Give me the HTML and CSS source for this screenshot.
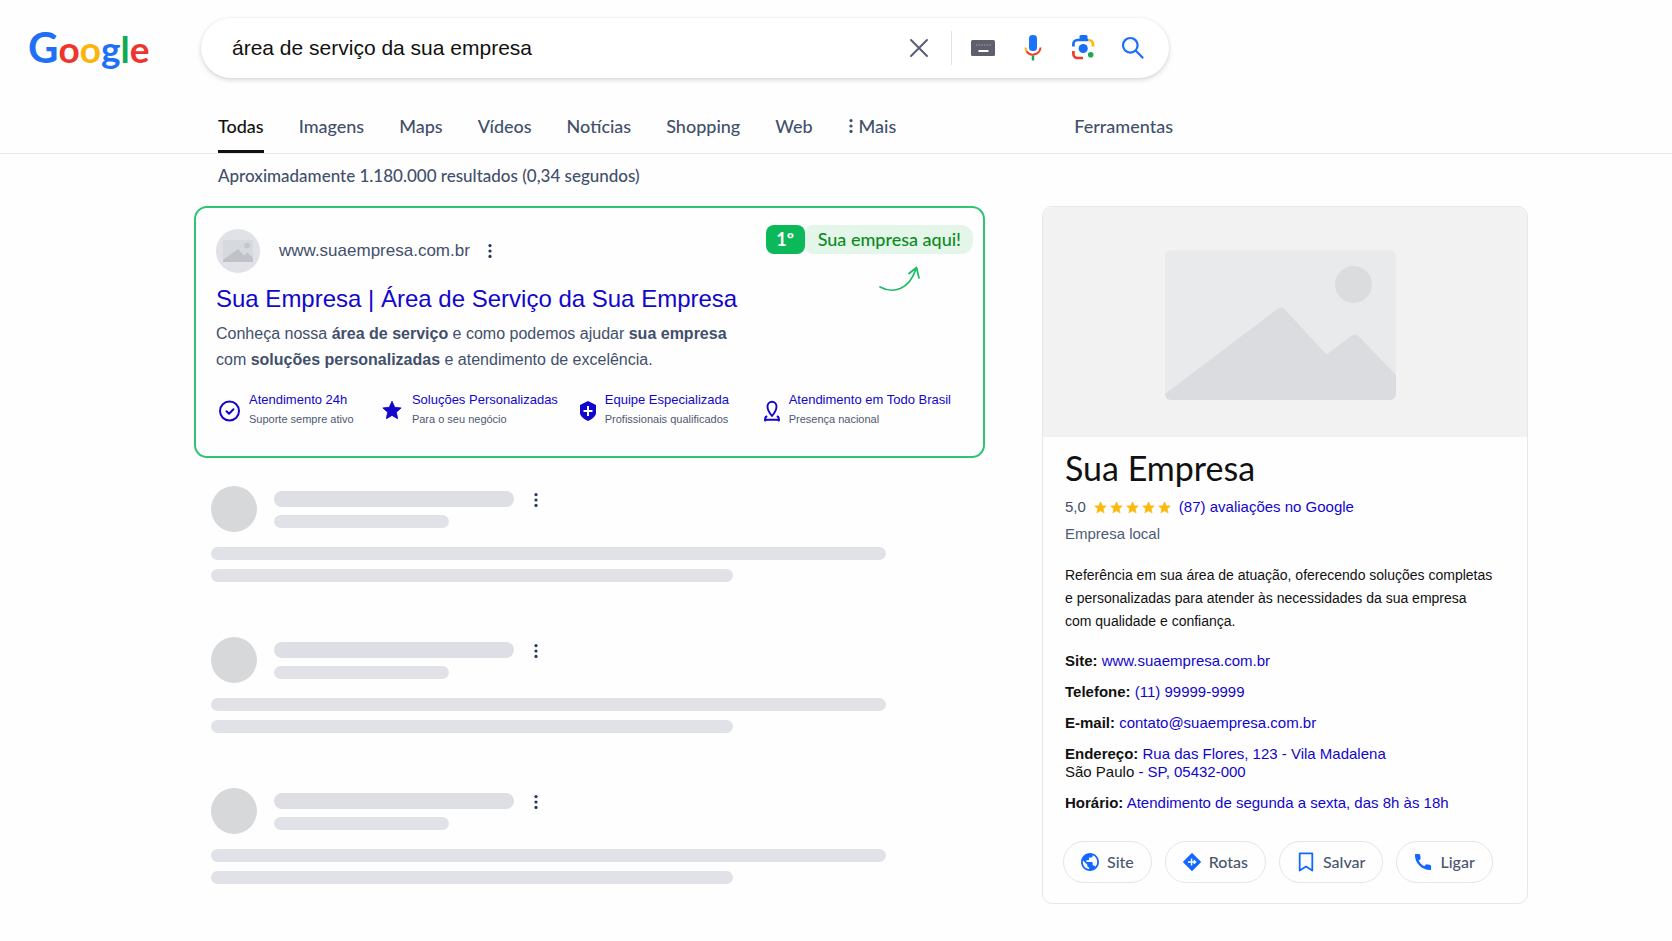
FILE: index.html
```
<!DOCTYPE html>
<html lang="pt-BR">
<head>
<meta charset="utf-8">
<meta name="viewport" content="width=device-width, initial-scale=1">
<title>área de serviço da sua empresa</title>
<link rel="stylesheet" href="styles.css">
</head>
<body>
<svg class="sprite" aria-hidden="true">
  <symbol id="dots" viewBox="0 0 6 16"><circle cx="3" cy="2.6" r="1.6"/><circle cx="3" cy="8" r="1.6"/><circle cx="3" cy="13.4" r="1.6"/></symbol>
  <symbol id="star" viewBox="0 0 24 24"><path d="M12 1.5l3.2 7.1 7.6.8-5.7 5.1 1.6 7.6L12 18.2l-6.7 3.9 1.6-7.6L1.2 9.4l7.6-.8z" stroke="currentColor" stroke-width="1" stroke-linejoin="round"/></symbol>
</svg>

<header class="header">
  <a class="logo" href="#" aria-label="Google"><span class="logo-cap blue">G</span><span class="red">o</span><span class="yellow">o</span><span class="blue">g</span><span class="green">l</span><span class="red">e</span></a>
  <form class="search" role="search">
    <input class="search-input" type="text" aria-label="Pesquisar" value="área de serviço da sua empresa">
    <button class="icon-btn" type="button" aria-label="Limpar">
      <svg viewBox="0 0 24 24" fill="none" stroke="#566077" stroke-width="2" stroke-linecap="round"><path d="M4 4l16 16M20 4L4 20"/></svg>
    </button>
    <span class="search-divider"></span>
    <span class="search-tools">
      <button class="icon-btn" type="button" aria-label="Teclado">
        <svg viewBox="0 0 24 24"><rect x="0" y="4" width="24" height="16" rx="1.5" fill="#5c606d"/><path d="M5 9h15" stroke="#a5a8b2" stroke-width="1.2" stroke-dasharray="1.4 1.3"/><path d="M7.500 15h10" stroke="#fff" stroke-width="2"/></svg>
      </button>
      <button class="icon-btn" type="button" aria-label="Pesquisa por voz">
        <svg viewBox="0 0 24 24" fill="none" stroke-width="2"><rect x="8" y="-1" width="8" height="16" rx="3.500" fill="#1a73f8"/><path d="M4.500 11.500a7.500 7.500 0 0 0 1.300 4" stroke="#fbb604"/><path d="M5.600 15.200A7.600 7.600 0 0 0 19.500 11.500" stroke="#f03a2b"/><path d="M12 19.500v5" stroke="#1da750" stroke-width="2.500"/></svg>
      </button>
      <button class="icon-btn" type="button" aria-label="Pesquisa por imagem">
        <svg viewBox="0 0 24 24" fill="none" stroke-width="2.700"><path d="M2.400 10.500V8a4 4 0 0 1 4-4h11" stroke="#1a6dfa"/><path d="M8.500 4V.5q0-1.500 1.500-1.500h5q1.500 0 1.500 1.500V4z" fill="#1a6dfa"/><path d="M17.500 4a4.500 4.500 0 0 1 4.500 4.500V10.500" stroke="#fbbc04"/><path d="M2.400 15v3a4 4 0 0 0 4 4H12" stroke="#f03a2b"/><circle cx="12.200" cy="12.500" r="4.600" fill="#1a6dfa"/><circle cx="19.700" cy="18.800" r="2.800" fill="#1da750"/></svg>
      </button>
      <button class="icon-btn" type="submit" aria-label="Pesquisar">
        <svg viewBox="0 0 24 24" fill="none" stroke="#1a6dfa" stroke-width="2.200" stroke-linecap="round"><circle cx="9.300" cy="9.300" r="7.300"/><path d="M14.600 14.600l6.900 7"/></svg>
      </button>
    </span>
  </form>
</header>

<nav class="tabs" aria-label="Filtros">
  <div class="tabs-inner">
    <a class="tab tab-active" href="#">Todas</a>
    <a class="tab" href="#">Imagens</a>
    <a class="tab" href="#">Maps</a>
    <a class="tab" href="#">Vídeos</a>
    <a class="tab" href="#">Notícias</a>
    <a class="tab" href="#">Shopping</a>
    <a class="tab" href="#">Web</a>
    <a class="tab tab-more" href="#"><svg class="dots" fill="currentColor"><use href="#dots"/></svg>Mais</a>
    <a class="tab tab-tools" href="#">Ferramentas</a>
  </div>
</nav>

<main class="page">
  <p class="stats">Aproximadamente 1.180.000 resultados (0,34 segundos)</p>
  <div class="columns">
    <section class="results">
      <article class="result">
        <div class="result-top">
          <div class="source">
            <span class="avatar">
              <svg viewBox="0 0 30 22"><rect width="30" height="22" rx="1" fill="#d6d9de"/><circle cx="24" cy="5.500" r="2.800" fill="#c3c6ca"/><path d="M0 22v-2L15 9l6 6.500 3.500-3L30 18v4z" fill="#bfc2c6"/></svg>
            </span>
            <span class="source-url">www.suaempresa.com.br</span>
            <button class="more-btn" type="button" aria-label="Mais opções"><svg class="dots" fill="currentColor"><use href="#dots"/></svg></button>
          </div>
          <div class="rank">
            <span class="rank-num">1º</span><span class="rank-text">Sua empresa aqui!</span>
            <svg class="rank-arrow" viewBox="0 0 42 26" fill="none" stroke="#19bd63" stroke-width="1.700" stroke-linecap="round" stroke-linejoin="round"><path d="M2 21C15 28 31 24 38 3M31 7.500l7.500-6 2.500 10.500"/></svg>
          </div>
        </div>
        <h2 class="result-title"><a href="#">Sua Empresa | Área de Serviço da Sua Empresa</a></h2>
        <p class="result-text">Conheça nossa <b>área de serviço</b> e como podemos ajudar <b>sua empresa</b><br>com <b>soluções personalizadas</b> e atendimento de excelência.</p>
        <ul class="features">
          <li class="feature">
            <svg class="feature-icon" viewBox="0 0 22 22" fill="none" stroke="currentColor" stroke-width="2" stroke-linecap="round" stroke-linejoin="round"><circle cx="11.500" cy="11" r="9.500"/><path d="M8.500 11.300l2.500 2.500 4.500-4.600"/></svg>
            <div><a class="feature-name" href="#">Atendimento 24h</a><span class="feature-note">Suporte sempre ativo</span></div>
          </li>
          <li class="feature">
            <svg class="feature-icon" viewBox="-1 0 26 26" fill="currentColor"><use href="#star" width="24" height="24"/></svg>
            <div><a class="feature-name" href="#">Soluções Personalizadas</a><span class="feature-note">Para o seu negócio</span></div>
          </li>
          <li class="feature">
            <svg class="feature-icon" viewBox="-3 0 22 22"><path d="M11 1l8 4v8c0 3-4 6.500-8 8-4-1.500-8-5-8-8V5z" fill="currentColor"/><path d="M11 6v10M6.500 11h9" stroke="#fff" stroke-width="2"/></svg>
            <div><a class="feature-name" href="#">Equipe Especializada</a><span class="feature-note">Profissionais qualificados</span></div>
          </li>
          <li class="feature">
            <svg class="feature-icon" viewBox="-3 0 22 22" fill="none" stroke="currentColor" stroke-width="1.900" stroke-linecap="round" stroke-linejoin="round"><path d="M11 16C8 12.500 6.500 9.500 6.500 6.500a4.500 4.800 0 0 1 9 0c0 3-1.500 6-4.500 9.500z"/><path d="M5.500 16.500c-1.500.5-1.500 3-1.500 4l2-.8h10l2 .8c0-1 0-3.500-1.500-4"/></svg>
            <div><a class="feature-name" href="#">Atendimento em Todo Brasil</a><span class="feature-note">Presença nacional</span></div>
          </li>
        </ul>
      </article>

      <div class="placeholders">
        <div class="placeholder">
          <div class="ph-head"><span class="ph-circle"></span><div class="ph-bars"><span class="ph-bar ph-name"></span><span class="ph-bar ph-url"></span></div><button class="more-btn ph-more" type="button" aria-label="Mais opções"><svg class="dots" fill="currentColor"><use href="#dots"/></svg></button></div>
          <span class="ph-bar ph-long"></span><span class="ph-bar ph-short"></span>
        </div>
        <div class="placeholder">
          <div class="ph-head"><span class="ph-circle"></span><div class="ph-bars"><span class="ph-bar ph-name"></span><span class="ph-bar ph-url"></span></div><button class="more-btn ph-more" type="button" aria-label="Mais opções"><svg class="dots" fill="currentColor"><use href="#dots"/></svg></button></div>
          <span class="ph-bar ph-long"></span><span class="ph-bar ph-short"></span>
        </div>
        <div class="placeholder">
          <div class="ph-head"><span class="ph-circle"></span><div class="ph-bars"><span class="ph-bar ph-name"></span><span class="ph-bar ph-url"></span></div><button class="more-btn ph-more" type="button" aria-label="Mais opções"><svg class="dots" fill="currentColor"><use href="#dots"/></svg></button></div>
          <span class="ph-bar ph-long"></span><span class="ph-bar ph-short"></span>
        </div>
      </div>
    </section>

    <aside class="card">
      <div class="card-photo">
        <svg class="card-picture" viewBox="0 0 231 150">
          <clipPath id="frame"><rect width="231" height="150" rx="6"/></clipPath>
          <g clip-path="url(#frame)"><rect width="231" height="150" fill="#e9eaec"/><circle cx="188.500" cy="34.500" r="18.500" fill="#dbdcde"/><path d="M0 150v-6L113 58.500q3-2 6 0L161.500 104.500 187 85.500q3-2 6 0L231 125v25z" fill="#dbdcdf"/></g>
        </svg>
      </div>
      <div class="card-body">
        <h1 class="card-title">Sua Empresa</h1>
        <div class="rating">
          <span>5,0</span>
          <span class="stars" role="img" aria-label="5 de 5 estrelas"><svg><use href="#star"/></svg><svg><use href="#star"/></svg><svg><use href="#star"/></svg><svg><use href="#star"/></svg><svg><use href="#star"/></svg></span>
          <a href="#">(87) avaliações no Google</a>
        </div>
        <p class="card-kind">Empresa local</p>
        <p class="card-about">Referência em sua área de atuação, oferecendo soluções completas<br>e personalizadas para atender às necessidades da sua empresa<br>com qualidade e confiança.</p>
        <ul class="details">
          <li><b>Site:</b> <a href="#">www.suaempresa.com.br</a></li>
          <li><b>Telefone:</b> <a href="#">(11) 99999-9999</a></li>
          <li><b>E-mail:</b> <a href="#">contato@suaempresa.com.br</a></li>
          <li><b>Endereço:</b> <a href="#">Rua das Flores, 123 - Vila Madalena</a><br>São Paulo <a href="#">- SP, 05432-000</a></li>
          <li><b>Horário:</b> <a href="#">Atendimento de segunda a sexta, das 8h às 18h</a></li>
        </ul>
        <div class="actions">
          <button class="action" type="button"><svg viewBox="2 2 20 20" fill="currentColor"><path d="M12 2C6.480 2 2 6.480 2 12s4.480 10 10 10 10-4.480 10-10S17.520 2 12 2zm-1 17.930c-3.950-.49-7-3.850-7-7.930 0-.62.080-1.210.21-1.790L9 15v1c0 1.100.9 2 2 2v1.930zm6.900-2.540c-.26-.81-1-1.390-1.900-1.390h-1v-3c0-.55-.45-1-1-1H8v-2h2c.55 0 1-.45 1-1V7h2c1.100 0 2-.9 2-2v-.41c2.930 1.190 5 4.060 5 7.410 0 2.080-.8 3.970-2.100 5.390z"/></svg>Site</button>
          <button class="action" type="button"><svg viewBox="0 0 20 20"><path d="M10 .8L19.200 10 10 19.200.8 10z" fill="currentColor" stroke="currentColor" stroke-width="1.400" stroke-linejoin="round"/><path d="M5.500 10h9M9.500 6v8M12 8l2 2-2 2" stroke="#fff" stroke-width="1.600" fill="none"/></svg>Rotas</button>
          <button class="action" type="button"><svg viewBox="0 0 20 20" fill="none" stroke="currentColor" stroke-width="2" stroke-linejoin="round"><path d="M3 .5h14v19l-7-4.500-7 4.500z"/></svg>Salvar</button>
          <button class="action" type="button"><svg viewBox="0 0 20 20"><path d="M2 1h3.500q1 0 1.200 1L7.400 5.500q.2.900-.5 1.500L5.200 8.700q2 4 6.100 6.100L13 13.100q.6-.7 1.500-.5l3.500.7q1 .2 1 1.200V18q0 1-1 1C8.500 19 1 11.500 1 2q0-1 1-1z" fill="currentColor"/></svg>Ligar</button>
        </div>
      </div>
    </aside>
  </div>
</main>
</body>
</html>
```
FILE: styles.css
```
* { box-sizing: border-box; }

body {
  margin: 0;
  background: #fefefe;
  color: #111;
  font: 15px/18px "Liberation Sans", Arial, sans-serif;
}

h1, h2, p, ul { margin: 0; padding: 0; }
ul { list-style: none; }
a { color: #1206cc; text-decoration: none; }
button { margin: 0; padding: 0; border: 0; background: none; cursor: pointer; }
svg { display: block; overflow: visible; }

.sprite { position: absolute; width: 0; height: 0; }
.dots { width: 6px; height: 16px; }

/* Header */
.header {
  display: flex;
  align-items: center;
  padding: 17px 32px 0 28px;
}

.logo {
  flex: 0 0 173px;
  font: 700 37px/60px Lato, sans-serif;
}
.logo-cap { font-size: 42px; }
.blue { color: #1f70f5; }
.red { color: #ee352d; }
.yellow { color: #fbb40c; }
.green { color: #12aa52; }

.search {
  flex: 0 1 968px;
  display: flex;
  align-items: center;
  height: 60px;
  padding: 0 24px 0 31px;
  border-radius: 30px;
  background: #fff;
  box-shadow: 0 2px 5px rgba(60, 64, 67, .2), 0 0 2px rgba(60, 64, 67, .08);
}
.search-input {
  flex: 1;
  min-width: 0;
  height: 40px;
  padding: 0;
  border: 0;
  outline: 0;
  background: none;
  color: #111;
  font: 21px/40px "Liberation Sans", Arial, sans-serif;
}
.icon-btn, .icon-btn svg { width: 24px; height: 24px; }
.search-divider { width: 1px; height: 34px; margin: 0 19px 0 20px; background: #dfe3ee; }
.search-tools { display: flex; gap: 26px; }

/* Tabs */
.tabs { margin-top: 35px; border-bottom: 1px solid #e6e9f1; }
.tabs-inner {
  display: flex;
  gap: 35px;
  max-width: 1173px;
  padding-left: 218px;
}
.tab {
  padding-bottom: 12px;
  border-bottom: 3px solid transparent;
  color: #42506b;
  font: 500 18px/24px Lato, sans-serif;
}
.tab-active { border-color: #111; color: #111; }
.tab-more { display: flex; align-items: center; gap: 5px; }
.tab-tools { margin-left: auto; }

/* Page */
.page { padding: 10px 32px 38px 194px; }
.stats {
  padding-left: 24px;
  color: #42506b;
  font: 500 17px/24px Lato, sans-serif;
}
.columns {
  display: flex;
  align-items: flex-start;
  gap: 57px;
  margin-top: 18px;
}
.results { flex: 0 1 791px; }

/* Highlighted result */
.result {
  padding: 17px 10px 26px 20px;
  border: 2px solid #2fc474;
  border-radius: 13px;
}
.result-top { display: flex; justify-content: space-between; align-items: flex-start; }
.source { display: flex; align-items: center; padding-top: 4px; }
.avatar {
  display: grid;
  place-items: center;
  width: 44px;
  height: 44px;
  border-radius: 50%;
  background: #e0e2e7;
}
.avatar svg { width: 30px; height: 22px; }
.source-url { margin: 0 17px 0 19px; color: #42506b; font-size: 17px; }
.more-btn { color: #25355c; }

.rank { position: relative; display: flex; font: 500 18px/29px Lato, sans-serif; }
.rank-num {
  width: 39px;
  border-radius: 8px;
  background: #0cb958;
  color: #fff;
  font-weight: 700;
  text-align: center;
}
.rank-text {
  padding: 0 12px 0 13px;
  border-radius: 8px 12px 12px 8px;
  background: #e3f6e9;
  color: #0b8a22;
}
.rank-arrow { position: absolute; top: 41px; right: 53px; width: 42px; height: 26px; }

.result-title { margin-top: 10px; font-size: 24px; line-height: 32px; font-weight: 400; }
.result-text { margin-top: 6px; color: #42506b; font-size: 16px; line-height: 26px; }

.features {
  display: grid;
  grid-template-columns: 163fr 193fr 184fr 193fr;
  margin-top: 18px;
  padding: 0 22px 0 2px;
}
.feature { display: flex; align-items: center; gap: 9px; color: #1206cc; white-space: nowrap; }
.feature-icon { flex: none; width: 22px; height: 22px; }
.feature-name { display: block; font-size: 13px; line-height: 18px; }
.feature-note { display: block; color: #4d5972; font-size: 11px; line-height: 21px; }

/* Loading placeholders */
.placeholders { display: grid; gap: 55px; padding: 28px 0 0 17px; }
.placeholder { display: grid; gap: 9px; }
.ph-head { display: flex; align-items: center; margin-bottom: 6px; }
.ph-circle { width: 46px; height: 46px; border-radius: 50%; background: #d7d8da; }
.ph-bars { display: grid; gap: 8px; width: 240px; margin: 0 19px 0 17px; }
.ph-bar { height: 13px; border-radius: 8px; background: #e1e2e8; }
.ph-name { height: 16px; background: #dedfe5; }
.ph-url { width: 73%; }
.ph-long { width: 675px; max-width: 100%; }
.ph-short { width: 522px; max-width: 100%; }
.ph-more { align-self: flex-start; padding-top: 6px; }

/* Business card */
.card {
  flex: 0 1 486px;
  overflow: hidden;
  border: 1px solid #e3e7f0;
  border-radius: 10px;
}
.card-photo {
  display: flex;
  justify-content: center;
  padding: 43px 10px 37px 0;
  background: #f2f2f3;
}
.card-picture { width: 231px; height: 150px; }
.card-body { padding: 11px 19px 20px 22px; }
.card-title { font: 400 34px/40px Lato, sans-serif; }
.rating { display: flex; align-items: center; gap: 8px; margin-top: 7px; line-height: 24px; color: #42506b; }
.stars { display: flex; gap: 3px; color: #fbb90f; fill: currentColor; }
.stars svg { width: 13px; height: 13px; }
.card-kind { margin-top: 3px; color: #4d5b78; line-height: 24px; }
.card-about { margin-top: 18px; font-size: 14px; line-height: 23px; }
.details { display: grid; gap: 13px; margin-top: 19px; }

.actions { display: flex; flex-wrap: wrap; gap: 13px; margin: 29px 0 0 -2px; }
.action {
  display: flex;
  align-items: center;
  gap: 8px;
  height: 42px;
  padding: 0 17px;
  border: 1px solid #e3e6ef;
  border-radius: 21px;
  color: #4a566e;
  font: 500 16px/24px Lato, sans-serif;
}
.action svg { width: 18px; height: 18px; color: #1468ff; }
```
